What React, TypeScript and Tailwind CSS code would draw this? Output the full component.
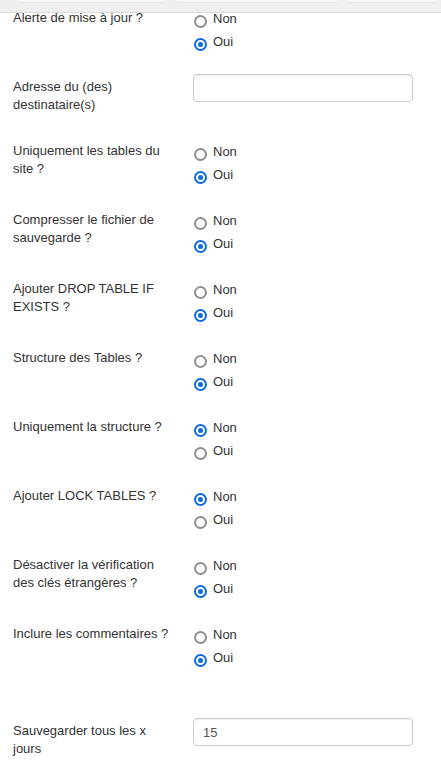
import React from "react";

type Row =
  | { kind: "radio"; label: string; checked: "Non" | "Oui"; mb: string }
  | { kind: "input"; label: string; value: string; mb: string };

const rows: Row[] = [
  { kind: "radio", label: "Alerte de mise à jour ?", checked: "Oui", mb: "mb-[21px]" },
  { kind: "input", label: "Adresse du (des) destinataire(s)", value: "", mb: "mb-[26px]" },
  { kind: "radio", label: "Uniquement les tables du site ?", checked: "Oui", mb: "mb-[23px]" },
  { kind: "radio", label: "Compresser le fichier de sauvegarde ?", checked: "Oui", mb: "mb-[23px]" },
  { kind: "radio", label: "Ajouter DROP TABLE IF EXISTS ?", checked: "Oui", mb: "mb-[23px]" },
  { kind: "radio", label: "Structure des Tables ?", checked: "Oui", mb: "mb-[23px]" },
  { kind: "radio", label: "Uniquement la structure ?", checked: "Non", mb: "mb-[23px]" },
  { kind: "radio", label: "Ajouter LOCK TABLES ?", checked: "Non", mb: "mb-[23px]" },
  { kind: "radio", label: "Désactiver la vérification des clés étrangères ?", checked: "Oui", mb: "mb-[23px]" },
  { kind: "radio", label: "Inclure les commentaires ?", checked: "Oui", mb: "mb-[49px]" },
  { kind: "input", label: "Sauvegarder tous les x jours", value: "15", mb: "mb-[20px]" },
];

function RadioItem({ value, checked }: { value: string; checked: boolean }) {
  return (
    <label className="flex items-start h-[23px] pt-[3px] cursor-pointer">
      <span
        className={
          checked
            ? "mt-[5px] ml-[1px] w-[13px] h-[13px] rounded-full border-2 border-[#0b6be0] flex items-center justify-center bg-white"
            : "mt-[5px] ml-[1px] w-[13px] h-[13px] rounded-full border-2 border-[#8e8e96] bg-white"
        }
      >
        {checked && <span className="w-[5px] h-[5px] rounded-full bg-[#0b6be0]" />}
      </span>
      <span className="ml-[6px]">{value}</span>
    </label>
  );
}

export default function App() {
  return (
    <div className="relative min-h-screen bg-white text-[13px] leading-[18px] text-[#333333] font-['Liberation_Sans',Arial,sans-serif]">
      <div className="fixed top-0 left-0 right-0 h-[13px] bg-[#efefef] border-b border-[#dadada] z-10 flex gap-[9px] pl-[18px] pr-[4px]">
        <div className="w-[147px] h-[3px] bg-[#f4f4f4] rounded-b-[3px] border-b border-[#e6e6e6]" />
        <div className="w-[165px] h-[3px] bg-[#f4f4f4] rounded-b-[3px] border-b border-[#e6e6e6]" />
        <div className="flex-1 h-[3px] bg-[#f4f4f4] rounded-b-[3px] border-b border-[#e6e6e6]" />
      </div>
      <div className="pt-[7px] pl-[13px]">
        {rows.map((row, i) =>
          row.kind === "radio" ? (
            <div key={i} className={`flex ${row.mb}`}>
              <div className="w-[180px] pt-[2px] pr-[20px]">{row.label}</div>
              <div className="flex flex-col">
                <RadioItem value="Non" checked={row.checked === "Non"} />
                <RadioItem value="Oui" checked={row.checked === "Oui"} />
              </div>
            </div>
          ) : (
            <div key={i} className={`flex ${row.mb}`}>
              <div className="w-[180px] pt-[4px] pr-[20px]">{row.label}</div>
              <input
                type="text"
                defaultValue={row.value}
                className="w-[220px] h-[28px] border border-[#cccccc] rounded-[4px] px-[9px] text-[13px] text-[#555555] shadow-[inset_0_1px_1px_rgba(0,0,0,0.075)] outline-none"
              />
            </div>
          )
        )}
      </div>
    </div>
  );
}
